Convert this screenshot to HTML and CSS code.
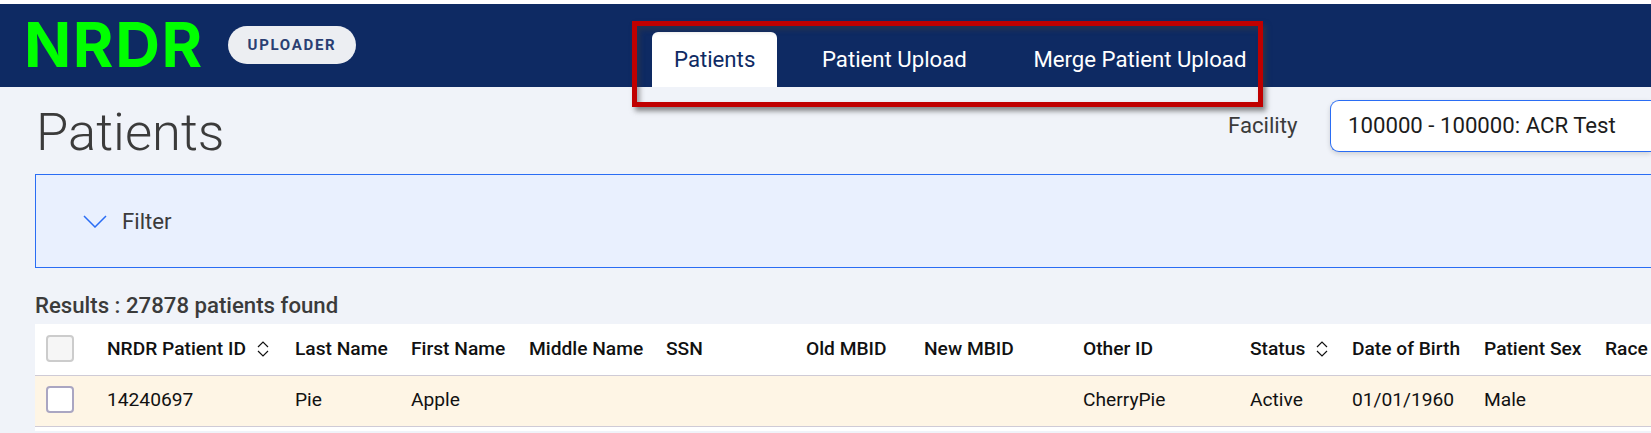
FILE: index.html
```html
<html>
<head>
    <link rel="stylesheet" href="styles.css">
</head>
<body>
<div class="topbar">
    <div class="logo">NRDR</div>
    <div class="badge">UPLOADER</div>
    <div class="tabs">
        <div class="tab active">Patients</div>
        <div class="tab">Patient Upload</div>
        <div class="tab">Merge Patient Upload</div>
    </div>
</div>
<div class="highlight"></div>
<div class="content">
    <div class="titlerow">
        <h1 class="title">Patients</h1>
        <label class="facilitylabel">Facility</label>
        <div class="facility">100000 - 100000: ACR Test</div>
    </div>
    <div class="filter">
        <svg class="chevron" width="24" height="13" viewBox="0 0 24 13"><path d="M1 1 L12 12 L23 1" fill="none" stroke="#2a6df4" stroke-width="1.5"/></svg>
        <span>Filter</span>
    </div>
    <div class="results">Results : 27878 patients found</div>
    <table class="patients">
        <colgroup>
            <col class="c-check"><col class="c-id"><col class="c-last"><col class="c-first"><col class="c-middle"><col class="c-ssn"><col class="c-old"><col class="c-new"><col class="c-other"><col class="c-status"><col class="c-dob"><col class="c-sex"><col class="c-race">
        </colgroup>
        <thead>
            <tr>
                <th><div class="check disabled"></div></th>
                <th>NRDR Patient ID<svg class="sort" width="12" height="16" viewBox="0 0 12 16"><path d="M1 6 L6 1 L11 6 M1 10 L6 15 L11 10" fill="none" stroke="#111" stroke-width="1.2"/></svg></th>
                <th>Last Name</th>
                <th>First Name</th>
                <th>Middle Name</th>
                <th>SSN</th>
                <th>Old MBID</th>
                <th>New MBID</th>
                <th>Other ID</th>
                <th>Status<svg class="sort" width="12" height="16" viewBox="0 0 12 16"><path d="M1 6 L6 1 L11 6 M1 10 L6 15 L11 10" fill="none" stroke="#111" stroke-width="1.2"/></svg></th>
                <th>Date of Birth</th>
                <th>Patient Sex</th>
                <th class="race">Race</th>
            </tr>
        </thead>
        <tbody>
            <tr class="selected">
                <td><div class="check"></div></td>
                <td>14240697</td>
                <td>Pie</td>
                <td>Apple</td>
                <td></td>
                <td></td>
                <td></td>
                <td></td>
                <td>CherryPie</td>
                <td>Active</td>
                <td>01/01/1960</td>
                <td>Male</td>
                <td></td>
            </tr>
            <tr class="blank"><td colspan="13"></td></tr>
        </tbody>
    </table>
</div>
</body>
</html>
```

FILE: styles.css
```css
html, body {
    margin: 0;
    height: 433px;
    overflow: hidden;
}
body {
    background: #f0f3f9;
    font-family: "Roboto", sans-serif;
    color: #3b3b3b;
    border-top: 4px solid #fff;
    box-sizing: border-box;
    position: relative;
    width: 1651px;
}
.topbar {
    height: 83px;
    background: #0e2a63;
    display: flex;
    align-items: flex-start;
}
.logo {
    font-family: "Inter", sans-serif;
    font-size: 62px;
    font-weight: 700;
    letter-spacing: 1.6px;
    line-height: 74px;
    color: #00ff00;
    margin: 4px 0 0 24px;
    width: 204px;
    flex-shrink: 0;
}
.badge {
    margin-top: 22px;
    width: 128px;
    height: 38px;
    border-radius: 19px;
    background: #eceef2;
    color: #2a3f72;
    font-size: 15px;
    font-weight: 700;
    letter-spacing: 1.7px;
    display: flex;
    align-items: center;
    justify-content: center;
    flex-shrink: 0;
}
.tabs {
    display: flex;
    margin-left: 296px;
    margin-top: 28px;
}
.tab {
    height: 55px;
    line-height: 54px;
    font-size: 22.2px;
    color: #fff;
    padding: 0 22px;
    margin-right: 22.6px;
    border-radius: 6px 6px 0 0;
    white-space: nowrap;
}
.tab.active {
    background: #fff;
    color: #0e2a63;
}
.highlight {
    position: absolute;
    left: 632px;
    top: 17px;
    width: 621px;
    height: 76px;
    border: 5px solid #c00000;
    box-shadow: 3px 4px 5px rgba(60, 60, 60, 0.6), inset 3px 4px 5px rgba(60, 60, 60, 0.45);
}
.content {
    padding-left: 35px;
}
.titlerow {
    display: flex;
    height: 87px;
    align-items: flex-start;
}
.title {
    margin: 13px 0 0 1px;
    font-size: 52.5px;
    font-weight: 300;
    line-height: 64px;
    color: #3b3b3b;
    width: 1192px;
    flex-shrink: 0;
}
.facilitylabel {
    font-size: 22.2px;
    margin-top: 26px;
    line-height: 24px;
    width: 102px;
    flex-shrink: 0;
}
.facility {
    margin-top: 13px;
    flex: 1;
    height: 50px;
    line-height: 48px;
    border: 1px solid #2a6df4;
    border-right: none;
    border-radius: 9px 0 0 9px;
    background: #fff;
    padding-left: 17px;
    font-size: 22.2px;
    color: #1c1c1c;
    box-shadow: 0 2px 5px rgba(0, 0, 0, 0.15);
}
.filter {
    height: 92px;
    background: #e9f0fe;
    border: 1px solid #2a6df4;
    border-right: none;
    display: flex;
    align-items: center;
    font-size: 22.2px;
}
.chevron {
    margin-left: 47px;
    margin-right: 15px;
}
.results {
    font-size: 22.2px;
    font-weight: 500;
    line-height: 24px;
    margin-top: 25px;
    margin-bottom: 7px;
}
.patients {
    border-collapse: collapse;
    table-layout: fixed;
    width: 100%;
    background: #fff;
    color: #111;
    font-size: 19.2px;
}
.c-check { width: 72px; }
.c-id { width: 188px; }
.c-last { width: 116px; }
.c-first { width: 118px; }
.c-middle { width: 137px; }
.c-ssn { width: 140px; }
.c-old { width: 118px; }
.c-new { width: 159px; }
.c-other { width: 167px; }
.c-status { width: 102px; }
.c-dob { width: 132px; }
.c-sex { width: 121px; }
.patients th {
    height: 51px;
    padding: 0 0 2px;
    text-align: left;
    font-weight: 500;
    border-bottom: 1px solid #cfcbd6;
    white-space: nowrap;
}
.patients td {
    height: 51px;
    padding: 0 0 2px;
    border-bottom: 1px solid #cfcbd6;
}
.patients th.race {
    overflow: hidden;
}
.selected td {
    background: #fef5e5;
}
.patients .blank td {
    height: 5px;
    padding: 0;
    border-bottom: none;
}
.check {
    width: 24px;
    height: 23px;
    margin-left: 11px;
    border: 2px solid #aaa6c2;
    border-radius: 4px;
    background: #fff;
}
.check.disabled {
    border-color: #ccc;
    background: #f6f6f6;
}
.sort {
    vertical-align: -2px;
    margin-left: 11px;
}
```
